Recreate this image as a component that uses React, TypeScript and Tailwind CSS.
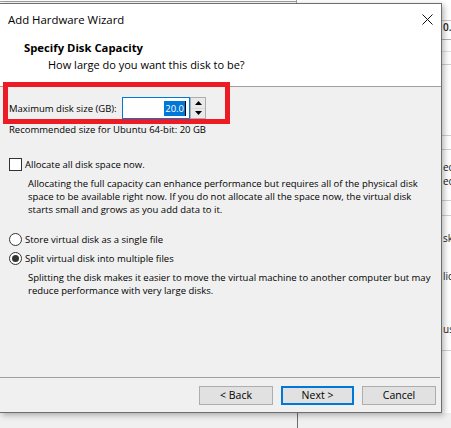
import React from "react";

const uiFont = "font-['Open_Sans','Noto_Sans',sans-serif]";

function CloseIcon() {
    return <svg width="11" height="11" viewBox="0 0 11 11" className="block">
        <path d="M0.5 0.5 L10.5 10.5 M10.5 0.5 L0.5 10.5" stroke="#111" strokeWidth="1" fill="none" />
    </svg>
}

function Spinner() {
    return <div className="flex flex-col w-[16px] h-[22px] border border-[#adadad] bg-[#f0f0f0]">
        <div className="flex-1 flex items-center justify-center border-b border-[#dadada] bg-[#e9e9e9]">
            <svg width="7" height="4" viewBox="0 0 7 4"><path d="M3.5 0 L7 4 L0 4 Z" fill="#000" /></svg>
        </div>
        <div className="flex-1 flex items-center justify-center bg-[#e9e9e9]">
            <svg width="7" height="4" viewBox="0 0 7 4"><path d="M0 0 L7 0 L3.5 4 Z" fill="#000" /></svg>
        </div>
    </div>
}

function CheckBox() {
    return <div className="w-[13px] h-[13px] border border-[#333] bg-white shrink-0" />
}

function Radio({checked}: {checked?: boolean}) {
    return <div className="w-[13px] h-[13px] rounded-full border border-[#333] bg-white shrink-0 flex items-center justify-center">
        {checked && <div className="w-[7px] h-[7px] rounded-full bg-[#333]" />}
    </div>
}

function WizardButton({label, primary}: {label: string, primary?: boolean}) {
    return <button
        type="button"
        className={primary
            ? "w-[73px] h-[19px] bg-[#e1e1e1] border-2 border-[#0078d7] text-[10.5px] leading-none text-black"
            : "w-[74px] h-[19px] bg-[#e1e1e1] border border-[#adadad] text-[10.5px] leading-none text-black"}>
        {label}
    </button>
}

// what sits behind the dialog on the desktop
function BackgroundWindow() {
    return <div className={"absolute inset-0 " + uiFont}>
        <div className="absolute left-0 top-0 w-[451px] h-[3px] bg-white" />
        <div className="absolute left-0 top-[1px] w-[296px] h-px bg-[#a0a0a0]" />
        <div className="absolute left-[296px] top-0 w-px h-[3px] bg-[#a0a0a0]" />
        <div className="absolute left-[442px] top-[3px] w-[9px] h-[410px] bg-white overflow-hidden">
            <div className="absolute left-0 top-[17px] w-[9px] h-px bg-[#c8c8c8]" />
            <div className="absolute left-[1px] top-[18px] text-[10px] leading-[13px] font-semibold text-[#222]">0.0</div>
            <div className="absolute left-0 top-[36px] w-[9px] h-px bg-[#b0b0b0]" />
            <div className="absolute left-0 top-[48px] w-[9px] h-px bg-[#e0e0e0]" />
            <div className="absolute left-0 top-[61px] w-[9px] h-px bg-[#d0d0d0]" />
            <div className="absolute left-0 top-[132px] w-[9px] h-px bg-[#d0d0d0]" />
            <div className="absolute left-0 top-[146px] w-[9px] h-px bg-[#d0d0d0]" />
            <div className="absolute left-[1px] top-[158px] text-[10px] leading-[13px] text-[#222]">ec</div>
            <div className="absolute left-[1px] top-[172px] text-[10px] leading-[13px] text-[#222]">ec</div>
            <div className="absolute left-0 top-[197px] w-[9px] h-px bg-[#d0d0d0]" />
            <div className="absolute left-0 top-[212px] w-[9px] h-px bg-[#d0d0d0]" />
            <div className="absolute left-[1px] top-[229px] text-[10px] leading-[13px] text-[#222]">sk</div>
            <div className="absolute left-[1px] top-[267px] text-[10px] leading-[13px] text-[#222]">lic</div>
            <div className="absolute left-[1px] top-[320px] text-[10px] leading-[13px] text-[#222]">us</div>
            <div className="absolute left-0 top-[347px] w-[9px] h-px bg-[#d0d0d0]" />
        </div>
        <div className="absolute left-[297px] top-[413px] w-px h-[15px] bg-[#6d6d6d]" />
    </div>
}

export default function App() {
    return <div className={"relative w-[451px] h-[428px] overflow-hidden bg-[#f0f0f0] text-black " + uiFont}>
        <BackgroundWindow />
        <div className="relative mt-[3px] w-[442px] h-[410px] flex flex-col border-t border-r border-b border-[#6e6e6e] bg-[#f0f0f0] shadow-[2px_2px_6px_rgba(0,0,0,0.3)]">
            <div className="h-[82px] bg-white flex flex-col">
                <div className="h-[31px] flex items-center justify-between">
                    <span className="pl-[8px] text-[11.4px] leading-none">Add Hardware Wizard</span>
                    <div className="w-[19px] flex justify-start">
                        <CloseIcon />
                    </div>
                </div>
                <div className="mt-[5px] pl-[24px] text-[11.3px] leading-[15px] font-bold">Specify Disk Capacity</div>
                <div className="mt-[2px] pl-[48px] text-[11px] leading-[15px]">How large do you want this disk to be?</div>
            </div>
            <div className="h-px bg-[#a0a0a0]" />
            <div className="flex-1 flex flex-col text-[9.5px] leading-[13px]">
                <div className="mt-[10px] h-[22px] flex items-center">
                    <span className="pl-[9px] w-[122px]">Maximum disk size (GB):</span>
                    <div className="w-[68px] h-[22px] border border-[#0078d7] bg-white flex items-center justify-end pr-[3px]">
                        <span className="bg-[#0078d7] text-white px-px leading-[15px]">20.0</span>
                        <span className="w-px h-[15px] bg-black" />
                    </div>
                    <Spinner />
                </div>
                <div className="mt-[4px] pl-[9px]">Recommended size for Ubuntu 64-bit: 20 GB</div>
                <div className="mt-[22px] pl-[9px] flex items-center gap-[3px]">
                    <CheckBox />
                    <span>Allocate all disk space now.</span>
                </div>
                <p className="mt-[6px] pl-[28px] whitespace-nowrap">
                    Allocating the full capacity can enhance performance but requires all of the physical disk<br />
                    space to be available right now. If you do not allocate all the space now, the virtual disk<br />
                    starts small and grows as you add data to it.
                </p>
                <div className="mt-[17px] pl-[9px] flex items-center gap-[3px]">
                    <Radio />
                    <span>Store virtual disk as a single file</span>
                </div>
                <div className="mt-[6px] pl-[9px] flex items-center gap-[3px]">
                    <Radio checked />
                    <span>Split virtual disk into multiple files</span>
                </div>
                <p className="mt-[6px] pl-[28px] whitespace-nowrap">
                    Splitting the disk makes it easier to move the virtual machine to another computer but may<br />
                    reduce performance with very large disks.
                </p>
                <div className="flex-1" />
                <div className="h-px bg-[#a0a0a0] mr-px" />
                <div className="mt-[8px] mb-[7px] flex justify-end gap-[8px] pr-[5px]">
                    <WizardButton label="< Back" />
                    <WizardButton label="Next >" primary />
                    <WizardButton label="Cancel" />
                </div>
            </div>
            <div className="absolute left-[3px] top-[78px] w-[227px] h-[42px] border-[5px] border-[#ed1c24]" />
        </div>
    </div>
}
